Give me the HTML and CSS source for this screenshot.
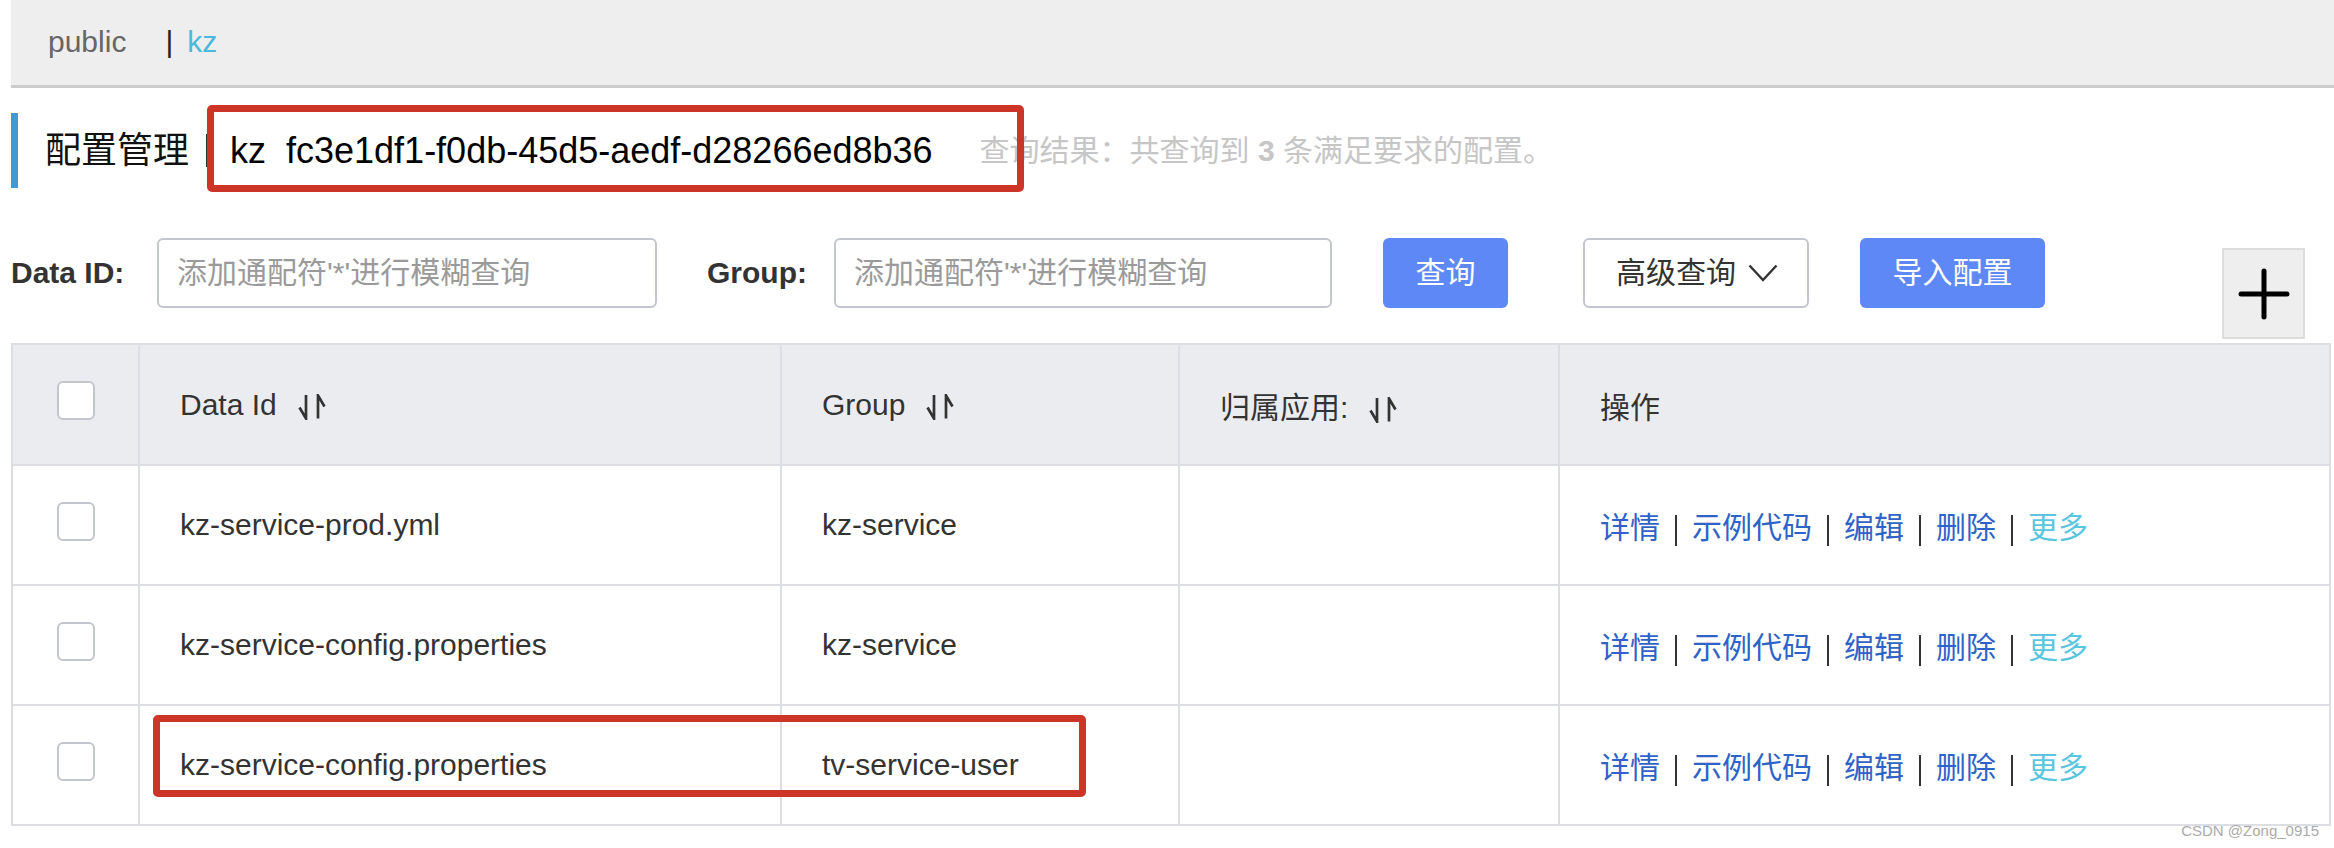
FILE: index.html
```html
<!DOCTYPE html>
<html lang="zh-CN">
<head>
<meta charset="utf-8">
<title>配置管理</title>
<link rel="stylesheet" href="styles.css">
</head>
<body>
<div class="page">
  <div class="ns-bar">
    <span class="ns-item">public</span>
    <span class="ns-sep">|</span>
    <span class="ns-item ns-active">kz</span>
  </div>

  <div class="title-row">
    <span class="title-mark"></span>
    <h1 class="title">配置管理</h1>
    <span class="title-sep"></span>
    <span class="title-ns">kz&nbsp; fc3e1df1-f0db-45d5-aedf-d28266ed8b36</span>
    <span class="title-result">查询结果：共查询到 <b>3</b> 条满足要求的配置。</span>
  </div>

  <div class="search-row">
    <label class="field-label label-dataid">Data ID:</label>
    <input class="field-input input-dataid" placeholder="添加通配符'*'进行模糊查询">
    <label class="field-label label-group">Group:</label>
    <input class="field-input input-group" placeholder="添加通配符'*'进行模糊查询">
    <button class="btn btn-primary btn-query">查询</button>
    <button class="btn btn-normal btn-advanced">高级查询<svg class="chevron" width="30" height="18" viewBox="0 0 30 18"><polyline points="1.5,1.5 15,16 28.5,1.5" fill="none" stroke="#333" stroke-width="2.4" stroke-linejoin="miter"/></svg></button>
    <button class="btn btn-primary btn-import">导入配置</button>
    <button class="btn-add"><svg width="52" height="52" viewBox="0 0 52 52"><path d="M26 3 V49 M3 26 H49" stroke="#000" stroke-width="5" stroke-linecap="round" fill="none"/></svg></button>
  </div>

  <table class="config-table">
    <colgroup>
      <col class="c-check"><col class="c-id"><col class="c-group"><col class="c-app"><col class="c-ops">
    </colgroup>
    <thead>
      <tr>
        <th class="cell-check"><span class="checkbox"></span></th>
        <th>Data Id<svg class="sort" width="28" height="26" viewBox="0 0 28 26"><path d="M8 1 V24.5 L1.5 13.5 M20 24.5 V1.5 L26.5 12.5" fill="none" stroke="#333" stroke-width="2.7"/></svg></th>
        <th>Group<svg class="sort" width="28" height="26" viewBox="0 0 28 26"><path d="M8 1 V24.5 L1.5 13.5 M20 24.5 V1.5 L26.5 12.5" fill="none" stroke="#333" stroke-width="2.7"/></svg></th>
        <th class="cjk">归属应用:<svg class="sort" width="28" height="26" viewBox="0 0 28 26"><path d="M8 1 V24.5 L1.5 13.5 M20 24.5 V1.5 L26.5 12.5" fill="none" stroke="#333" stroke-width="2.7"/></svg></th>
        <th class="cjk">操作</th>
      </tr>
    </thead>
    <tbody>
      <tr>
        <td class="cell-check"><span class="checkbox"></span></td>
        <td>kz-service-prod.yml</td>
        <td>kz-service</td>
        <td></td>
        <td class="ops"><a class="op">详情</a><span class="op-sep"></span><a class="op">示例代码</a><span class="op-sep"></span><a class="op">编辑</a><span class="op-sep"></span><a class="op">删除</a><span class="op-sep"></span><a class="op op-more">更多</a></td>
      </tr>
      <tr>
        <td class="cell-check"><span class="checkbox"></span></td>
        <td>kz-service-config.properties</td>
        <td>kz-service</td>
        <td></td>
        <td class="ops"><a class="op">详情</a><span class="op-sep"></span><a class="op">示例代码</a><span class="op-sep"></span><a class="op">编辑</a><span class="op-sep"></span><a class="op">删除</a><span class="op-sep"></span><a class="op op-more">更多</a></td>
      </tr>
      <tr>
        <td class="cell-check"><span class="checkbox"></span></td>
        <td>kz-service-config.properties</td>
        <td>tv-service-user</td>
        <td></td>
        <td class="ops"><a class="op">详情</a><span class="op-sep"></span><a class="op">示例代码</a><span class="op-sep"></span><a class="op">编辑</a><span class="op-sep"></span><a class="op">删除</a><span class="op-sep"></span><a class="op op-more">更多</a></td>
      </tr>
    </tbody>
  </table>

  <div class="annot annot-ns"></div>
  <div class="annot annot-row"></div>
  <div class="watermark">CSDN @Zong_0915</div>
</div>
</body>
</html>
```
FILE: styles.css
```css
* { box-sizing: border-box; }

html, body {
  margin: 0;
  padding: 0;
  background: #ffffff;
}

body {
  font-family: "Liberation Sans", "Noto Sans CJK SC", sans-serif;
  color: #333333;
  width: 2334px;
  height: 848px;
  overflow: hidden;
}

.page {
  position: relative;
  height: 848px;
  padding: 0 5px 0 11px;
}

/* namespace bar */
.ns-bar {
  display: flex;
  height: 88px;
  margin-right: -5px;
  padding: 24px 0 0 37px;
  background: #eeeeee;
  border-bottom: 3px solid #cccccc;
  font-size: 30px;
  line-height: 36px;
}

.ns-item { color: #666666; }
.ns-sep { color: #222222; margin-left: 39px; }
.ns-active { color: #4cb9dc; margin-left: 14px; }

/* title row */
.title-row {
  display: flex;
  align-items: center;
  height: 75px;
  margin-top: 25px;
}

.title-mark {
  align-self: stretch;
  width: 7px;
  background: #3e9ad0;
}

.title {
  margin: 0 0 0 27px;
  font-size: 36px;
  font-weight: normal;
  line-height: 1;
  color: #111111;
}

.title-sep {
  width: 2px;
  height: 33px;
  margin-left: 17px;
  background: #333333;
}

.title-ns {
  margin-left: 22px;
  font-size: 36px;
  line-height: 1;
  color: #000000;
  white-space: nowrap;
}

.title-result {
  margin-left: 47px;
  font-size: 30px;
  line-height: 1;
  color: #c6c6c6;
  white-space: nowrap;
}

.title-result b { font-weight: bold; }

/* search row */
.search-row {
  display: flex;
  align-items: flex-start;
  height: 101px;
  margin-top: 50px;
}

.field-label {
  display: flex;
  align-items: center;
  height: 70px;
  font-size: 30px;
  font-weight: bold;
  color: #333333;
}

.label-dataid { width: 146px; }
.label-group { width: 127px; margin-left: 50px; }

.field-input {
  height: 70px;
  padding: 0 18px;
  border: 2px solid #c4c6cf;
  border-radius: 6px;
  background: #ffffff;
  font-family: inherit;
  font-size: 30px;
  color: #333333;
  outline: none;
}

.field-input::placeholder { color: #9a9a9a; }

.input-dataid { width: 500px; }
.input-group { width: 498px; }

.btn {
  height: 70px;
  padding: 0;
  border: none;
  border-radius: 6px;
  font-family: inherit;
  font-size: 30px;
  line-height: 1;
}

.btn-primary {
  background: #5f88f7;
  color: #ffffff;
}

.btn-query { width: 125px; margin-left: 51px; }
.btn-import { width: 185px; margin-left: 51px; }

.btn-normal {
  display: flex;
  align-items: center;
  width: 226px;
  margin-left: 75px;
  padding-left: 31px;
  background: #ffffff;
  border: 2px solid #c4c6cf;
  color: #333333;
}

.chevron { margin-left: 12px; }

.btn-add {
  display: flex;
  align-items: center;
  justify-content: center;
  width: 83px;
  height: 91px;
  margin-top: 10px;
  margin-left: 177px;
  padding: 0;
  background: #eeeeee;
  border: 2px solid #dddddd;
}

/* table */
.config-table {
  width: 2318px;
  margin-top: 4px;
  border-collapse: collapse;
  table-layout: fixed;
  font-size: 30px;
  color: #333333;
}

.c-check { width: 127px; }
.c-id { width: 642px; }
.c-group { width: 398px; }
.c-app { width: 380px; }
.c-ops { width: 771px; }

.config-table th,
.config-table td {
  height: 120px;
  padding: 0 0 0 40px;
  border: 2px solid #dcdee3;
  text-align: left;
  vertical-align: middle;
  font-weight: normal;
  white-space: nowrap;
}

.config-table thead th {
  background: #ebecf0;
  height: 121px;
}

.config-table .cell-check {
  padding: 0;
  text-align: center;
}

.checkbox {
  display: inline-block;
  width: 38px;
  height: 39px;
  margin-bottom: 8px;
  vertical-align: middle;
  background: #ffffff;
  border: 2px solid #c4c6cf;
  border-radius: 6px;
}

.sort {
  margin-left: 21px;
  vertical-align: -5px;
}

.ops {
  font-size: 30px;
  padding-bottom: 4px;
}

.op {
  color: #2f63c8;
  text-decoration: none;
}

.op-more { color: #5bc5e0; }

.op-sep {
  display: inline-block;
  width: 2px;
  height: 31px;
  margin: 0 15px;
  vertical-align: middle;
  background: #333333;
}

/* red annotation frames drawn over the screenshot */
.annot {
  position: absolute;
  border: 7px solid #cc3527;
  border-radius: 5px;
}

.annot-ns {
  left: 207px;
  top: 105px;
  width: 817px;
  height: 87px;
}

.annot-row {
  left: 153px;
  top: 715px;
  width: 933px;
  height: 82px;
}

.watermark {
  position: absolute;
  right: 15px;
  top: 822px;
  font-size: 15px;
  color: #aaaaaa;
  white-space: nowrap;
}
```
